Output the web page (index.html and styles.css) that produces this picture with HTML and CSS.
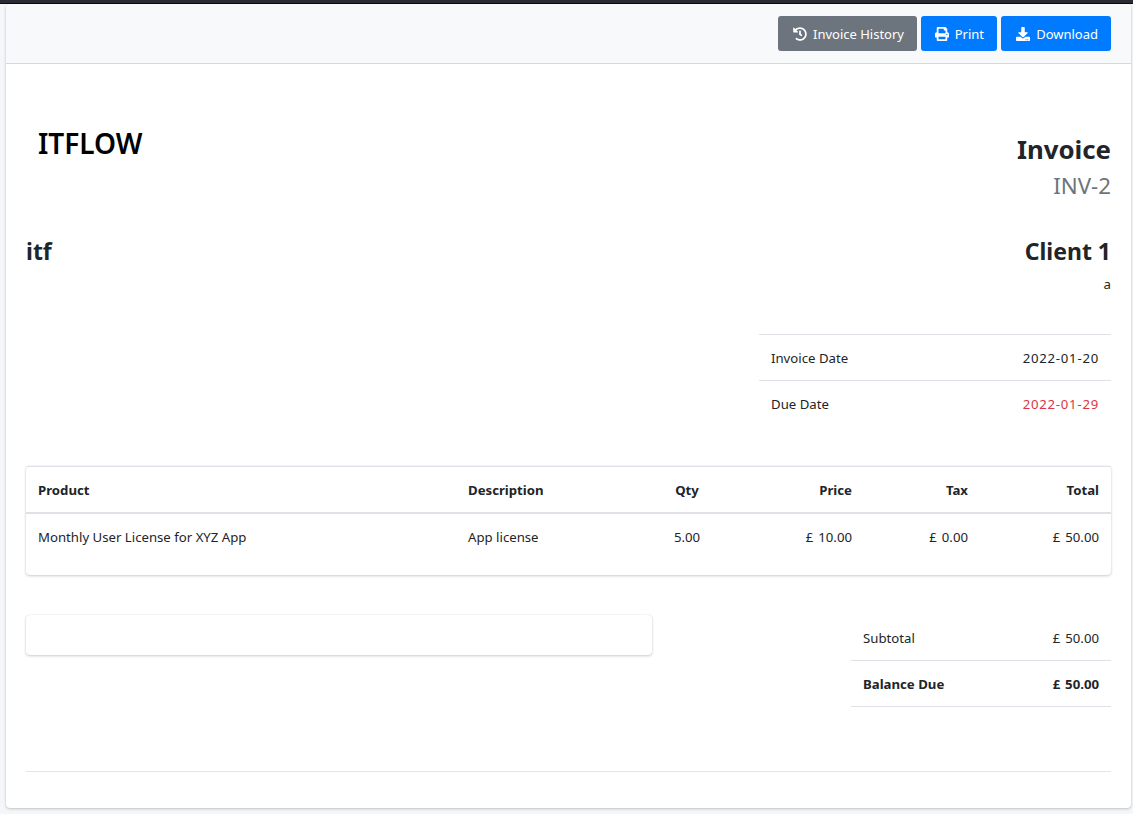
FILE: index.html
```html
<!DOCTYPE html>
<html lang="en">
<head>
    <meta charset="UTF-8">
    <meta name="viewport" content="width=device-width, initial-scale=1.0">
    <title>Invoice INV-2</title>
    <link rel="stylesheet" href="styles.css">
</head>
<body>
    <div class="topbar"></div>
    <div class="card invoice">
        <div class="card-header">
            <a class="btn btn-secondary" href="#">
                <svg viewBox="0 0 512 512"><path d="M504 255.500c.3 136.600-111.200 248.400-247.800 248.500-59 0-113.200-20.500-155.800-54.900-11.100-8.900-11.900-25.500-1.800-35.600l11.300-11.300c8.600-8.600 22.400-9.600 31.900-2C173.100 425.100 212.900 440 256 440c101.700 0 184-82.300 184-184 0-101.700-82.300-184-184-184-48.800 0-93.100 19-126.100 49.900l50.800 50.800c10.100 10.100 2.900 27.300-11.300 27.300H24c-8.800 0-16-7.200-16-16V38.600c0-14.300 17.200-21.400 27.300-11.300l49.400 49.400C129.200 34.100 189.600 8 256 8c136.800 0 247.700 110.800 248 247.500zM323.100 326.500l9.800-12.600c8.100-10.500 6.300-25.500-4.200-33.700L288 248.300V152c0-13.300-10.700-24-24-24h-16c-13.300 0-24 10.700-24 24v127.700l65.400 50.900c10.500 8.100 25.500 6.300 33.700-4.100z"/></svg>
                <span>Invoice History</span>
            </a>
            <a class="btn btn-primary" href="#">
                <svg viewBox="0 0 512 512"><path d="M448 192V77.300c0-8.500-3.400-16.600-9.400-22.600L393.400 9.400c-6-6-14.100-9.400-22.600-9.400H96C78.300 0 64 14.300 64 32v160c-35.300 0-64 28.700-64 64v112c0 8.800 7.200 16 16 16h48v96c0 17.700 14.300 32 32 32h320c17.700 0 32-14.300 32-32v-96h48c8.800 0 16-7.200 16-16V256c0-35.300-28.700-64-64-64zm-64 256H128v-96h256v96zm0-224H128V64h192v48c0 8.800 7.200 16 16 16h48v96zm48 72c-13.300 0-24-10.700-24-24s10.700-24 24-24 24 10.700 24 24-10.700 24-24 24z"/></svg>
                <span>Print</span>
            </a>
            <a class="btn btn-primary" href="#">
                <svg viewBox="0 0 512 512"><path d="M216 0h80c13.300 0 24 10.700 24 24v168h87.700c17.800 0 26.700 21.500 14.100 34.100L269.700 378.300c-7.500 7.500-19.800 7.500-27.300 0L90.100 226.100c-12.600-12.600-3.700-34.100 14.100-34.100H192V24c0-13.300 10.700-24 24-24zm296 376v112c0 13.300-10.700 24-24 24H24c-13.300 0-24-10.700-24-24V376c0-13.300 10.700-24 24-24h146.700l49 49c20.100 20.100 52.500 20.100 72.600 0l49-49H488c13.300 0 24 10.700 24 24zm-124 88c0-11-9-20-20-20s-20 9-20 20 9 20 20 20 20-9 20-20zm64 0c0-11-9-20-20-20s-20 9-20 20 9 20 20 20 20-9 20-20z"/></svg>
                <span>Download</span>
            </a>
        </div>
        <div class="card-body">
            <div class="row head">
                <div class="logo">ITFLOW</div>
                <div class="title">
                    <h3>Invoice</h3>
                    <div class="number">INV-2</div>
                </div>
            </div>

            <div class="row parties">
                <h4>itf</h4>
                <div class="client">
                    <h4>Client 1</h4>
                    <div class="address">a</div>
                </div>
            </div>

            <table class="dates">
                <tr>
                    <td>Invoice Date</td>
                    <td class="right date">2022-01-20</td>
                </tr>
                <tr>
                    <td>Due Date</td>
                    <td class="right date danger">2022-01-29</td>
                </tr>
            </table>

            <div class="card items">
                <table>
                    <colgroup>
                        <col class="c-product">
                        <col class="c-description">
                        <col class="c-qty">
                        <col class="c-price">
                        <col class="c-tax">
                        <col class="c-total">
                    </colgroup>
                    <thead>
                        <tr>
                            <th>Product</th>
                            <th>Description</th>
                            <th class="center">Qty</th>
                            <th class="right">Price</th>
                            <th class="right">Tax</th>
                            <th class="right">Total</th>
                        </tr>
                    </thead>
                    <tbody>
                        <tr>
                            <td>Monthly User License for XYZ App</td>
                            <td>App license</td>
                            <td class="center">5.00</td>
                            <td class="right">£ 10.00</td>
                            <td class="right">£ 0.00</td>
                            <td class="right">£ 50.00</td>
                        </tr>
                    </tbody>
                </table>
            </div>

            <div class="row summary">
                <div class="card notes"></div>
                <table class="totals">
                    <tr>
                        <td>Subtotal</td>
                        <td class="right">£ 50.00</td>
                    </tr>
                    <tr class="bold">
                        <td>Balance Due</td>
                        <td class="right">£ 50.00</td>
                    </tr>
                </table>
            </div>

            <hr>
        </div>
    </div>
</body>
</html>
```
FILE: styles.css
```css
*{
    box-sizing: border-box;
}
body{
    margin: 0;
    height: 814px;
    overflow: hidden;
    background-color: #f4f6f9;
    color: #212529;
    font-family: "Noto Sans", "Open Sans", sans-serif;
    font-size: 13.2px;
    line-height: 21px;
}
h3, h4{
    margin: 0;
    font-weight: 700;
}
.topbar{
    height: 4px;
    background-color: #2b2a33;
    border-bottom: 1px solid #0c0c0d;
}
.card{
    background-color: #fff;
    border-radius: 4px;
    box-shadow: 0 0 1px rgba(0, 0, 0, 0.125), 0 1px 3px rgba(0, 0, 0, 0.2);
}
.row{
    display: flex;
    justify-content: space-between;
    align-items: flex-start;
}
.right{
    text-align: right;
}
.center{
    text-align: center;
}

.invoice{
    width: 1125px;
    height: 804px;
    margin-left: 6px;
}
.card-header{
    display: flex;
    justify-content: flex-end;
    gap: 4px;
    height: 60px;
    padding: 12px 20px;
    background-color: #f8f9fa;
    border-bottom: 1px solid rgba(0, 0, 0, 0.125);
    border-radius: 4px 4px 0 0;
}
.card-body{
    padding: 0 20px;
}

.btn{
    display: flex;
    align-items: center;
    justify-content: flex-end;
    gap: 6px;
    height: 35px;
    width: 76px;
    padding: 1px 13px 0 0;
    border-radius: 3px;
    color: #fff;
    font-size: 13px;
    text-decoration: none;
    white-space: nowrap;
}
.btn svg{
    width: 14px;
    height: 14px;
    margin-top: -1px;
    fill: #fff;
}
.btn-secondary{
    width: 139px;
    background-color: #6c757d;
}
.btn-primary{
    background-color: #007bff;
}
.btn-primary:last-child{
    width: 110px;
}

.head{
    height: 174px;
    padding-top: 62px;
}
.logo{
    padding-left: 12px;
    color: #000;
    font-size: 28px;
    font-weight: 600;
    line-height: 34px;
}
.title{
    padding-top: 6px;
    text-align: right;
}
.title h3{
    font-size: 25.8px;
    line-height: 34px;
}
.number{
    color: #6c757d;
    font-size: 22.3px;
    line-height: 40px;
}

.parties{
    height: 96px;
}
.parties h4{
    font-size: 23px;
    line-height: 26px;
}
.client{
    text-align: right;
}
.address{
    margin-top: 10px;
}

table{
    border-collapse: separate;
    border-spacing: 0;
}
td, th{
    padding: 13px 12px 11px;
}
td.right{
    word-spacing: 1.5px;
}
.dates{
    width: 352px;
    margin-left: auto;
}
.dates td{
    border-top: 1px solid #dee2e6;
}
.dates .date{
    letter-spacing: 0.75px;
}
.danger{
    color: #dc3545;
}

.items{
    height: 109px;
    margin-top: 40px;
}
.items table{
    width: 100%;
    table-layout: fixed;
}
.items th{
    border-top: 1px solid #dee2e6;
    border-bottom: 2px solid #dee2e6;
    font-size: 13.2px;
    font-weight: 700;
    text-align: left;
}
.items th.right{
    text-align: right;
}
.items th.center{
    text-align: center;
}
.items .center{
    padding: 13px 0 11px;
}
.c-product{
    width: 430px;
}
.c-description{
    width: 205px;
}
.c-qty{
    width: 52px;
}
.c-price{
    width: 151px;
}
.c-tax{
    width: 116px;
}
.c-total{
    width: 131px;
}

.summary{
    margin-top: 40px;
}
.notes{
    width: 626px;
    height: 40px;
}
.totals{
    width: 260px;
}
.totals td{
    border-bottom: 1px solid #dee2e6;
}
.bold{
    font-size: 13.2px;
    font-weight: 700;
}
hr{
    margin: 64px 0 0;
    border: 0;
    border-top: 1px solid rgba(0, 0, 0, 0.1);
}
```
